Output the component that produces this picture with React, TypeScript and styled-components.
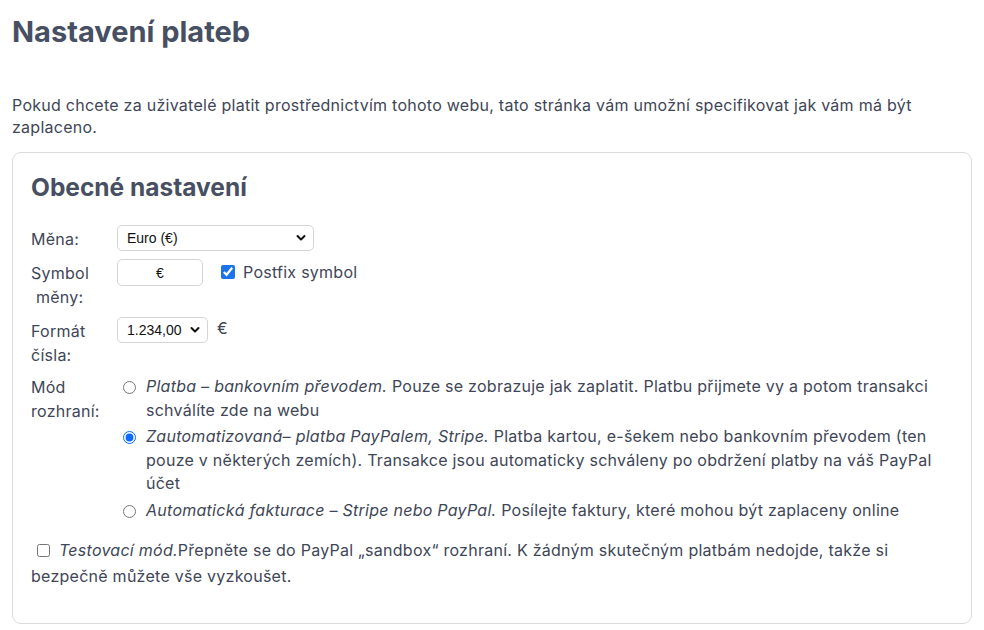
import React from "react";
import styled, { createGlobalStyle } from "styled-components";

const Global = createGlobalStyle`
  html, body { margin: 0; padding: 0; background: #ffffff; }
  body { font-family: Inter, "Noto Sans", sans-serif; color: #3e4657; letter-spacing: 0.26px; }
`;

const Page = styled.div`
  padding: 0 12px 8px 12px;
`;

const Title = styled.h1`
  margin: 0;
  padding-top: 14px;
  font-size: 29px;
  line-height: 36px;
  font-weight: 700;
  color: #474f62;
  letter-spacing: 0;
`;

const Intro = styled.p`
  margin: 44px 0 14px 0;
  font-size: 16px;
  line-height: 22px;
`;

const Card = styled.section`
  border: 1px solid #d9dbde;
  border-radius: 9px;
  padding: 18px 18px 34px 18px;
`;

const CardTitle = styled.h2`
  margin: 0 0 22px 0;
  font-size: 24.5px;
  line-height: 32px;
  font-weight: 700;
  color: #474f62;
  letter-spacing: 0;
`;

const FormGrid = styled.div`
  display: grid;
  grid-template-columns: 86px 1fr;
  row-gap: 8px;
  align-items: start;
`;

const Label = styled.div<{ $pt?: number }>`
  font-size: 16px;
  line-height: 24px;
  padding-top: ${(p) => (p.$pt ?? 2)}px;
`;

const Indent = styled.span`
  padding-left: 5px;
`;

const Controls = styled.div`
  display: flex;
  align-items: center;
`;

const SelectWrap = styled.div<{ $w: number }>`
  position: relative;
  width: ${(p) => p.$w}px;
  height: 26px;
`;

const Select = styled.select`
  appearance: none;
  -webkit-appearance: none;
  width: 100%;
  height: 100%;
  box-sizing: border-box;
  border: 1px solid #d3d5d9;
  border-radius: 5px;
  background: #fff;
  padding: 0 20px 0 9px;
  font-family: "Liberation Sans", Arial, sans-serif;
  font-size: 14px;
  letter-spacing: 0;
  color: #111;
  outline: none;
`;

const Chevron = styled.svg`
  position: absolute;
  right: 8px;
  top: 9px;
  pointer-events: none;
`;

const TextInput = styled.input`
  width: 86px;
  height: 27px;
  box-sizing: border-box;
  border: 1px solid #d3d5d9;
  border-radius: 5px;
  text-align: center;
  font-family: "Liberation Sans", Arial, sans-serif;
  font-size: 14px;
  color: #111;
  outline: none;
`;

const Check = styled.input`
  width: 14px;
  height: 14px;
  margin: 0;
  accent-color: #1a73e8;
`;

const CheckLabel = styled.label`
  display: flex;
  align-items: center;
  gap: 8px;
  margin-left: 18px;
  font-size: 16px;
  line-height: 24px;
  margin-top: -2px;
`;

const Suffix = styled.span`
  margin-left: 9px;
  font-size: 16px;
  margin-top: -5px;
`;

const Options = styled.div`
  display: flex;
  flex-direction: column;
  gap: 3px;
`;

const Option = styled.label`
  display: flex;
  align-items: flex-start;
  font-size: 16px;
  line-height: 23.5px;
`;

const Radio = styled.input`
  flex: none;
  width: 13px;
  height: 13px;
  margin: 6px 10px 0 6px;
  accent-color: #0a6cff;
`;

const Em = styled.em`
  font-style: italic;
`;

const TestLine = styled.p`
  margin: 15px 0 0 0;
  font-size: 16px;
  line-height: 26px;
`;

const InlineCheck = styled.input`
  width: 13px;
  height: 13px;
  margin: 0 9px 0 6px;
  vertical-align: -1px;
`;

const ChevronIcon = () => (
  <Chevron width="10" height="8" viewBox="0 0 10 8">
    <path d="M1.5 2 L5 5.5 L8.5 2" fill="none" stroke="#111" strokeWidth="2" strokeLinecap="round" strokeLinejoin="round" />
  </Chevron>
);

export default function App() {
  return (
    <>
      <Global />
      <Page>
        <Title>Nastavení plateb</Title>
        <Intro>
          Pokud chcete za uživatelé platit prostřednictvím tohoto webu, tato stránka vám umožní specifikovat jak vám má být
          zaplaceno.
        </Intro>
        <Card>
          <CardTitle>Obecné nastavení</CardTitle>
          <FormGrid>
            <Label>Měna:</Label>
            <Controls>
              <SelectWrap $w={197}>
                <Select defaultValue="eur">
                  <option value="eur">Euro (€)</option>
                  <option value="czk">Česká koruna (Kč)</option>
                  <option value="usd">US Dollar ($)</option>
                </Select>
                <ChevronIcon />
              </SelectWrap>
            </Controls>

            <Label>
              Symbol
              <br />
              <Indent>měny:</Indent>
            </Label>
            <Controls>
              <TextInput defaultValue="€" />
              <CheckLabel>
                <Check type="checkbox" defaultChecked />
                Postfix symbol
              </CheckLabel>
            </Controls>

            <Label>
              Formát
              <br />
              čísla:
            </Label>
            <Controls>
              <SelectWrap $w={91}>
                <Select defaultValue="a">
                  <option value="a">1.234,00</option>
                  <option value="b">1,234.00</option>
                  <option value="c">1 234,00</option>
                </Select>
                <ChevronIcon />
              </SelectWrap>
              <Suffix>€</Suffix>
            </Controls>

            <Label $pt={0}>
              Mód
              <br />
              rozhraní:
            </Label>
            <Options>
              <Option>
                <Radio type="radio" name="mode" />
                <span>
                  <Em>Platba – bankovním převodem.</Em> Pouze se zobrazuje jak zaplatit. Platbu přijmete vy a potom transakci
                  schválíte zde na webu
                </span>
              </Option>
              <Option>
                <Radio type="radio" name="mode" defaultChecked />
                <span>
                  <Em>Zautomatizovaná– platba PayPalem, Stripe.</Em> Platba kartou, e-šekem nebo bankovním převodem (ten
                  pouze v některých zemích). Transakce jsou automaticky schváleny po obdržení platby na váš PayPal účet
                </span>
              </Option>
              <Option>
                <Radio type="radio" name="mode" />
                <span>
                  <Em>Automatická fakturace – Stripe nebo PayPal.</Em> Posílejte faktury, které mohou být zaplaceny online
                </span>
              </Option>
            </Options>
          </FormGrid>
          <TestLine>
            <InlineCheck type="checkbox" />
            <Em>Testovací mód.</Em>Přepněte se do PayPal „sandbox“ rozhraní. K žádným skutečným platbám nedojde, takže si
            bezpečně můžete vše vyzkoušet.
          </TestLine>
        </Card>
      </Page>
    </>
  );
}
